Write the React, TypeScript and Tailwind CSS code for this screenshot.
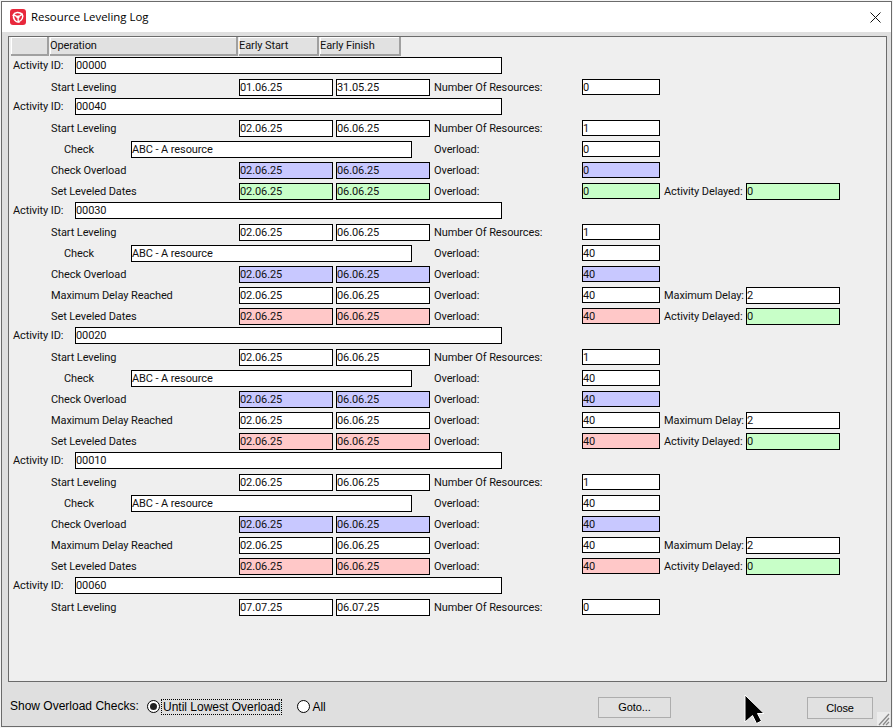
type Tone = 'white' | 'blue' | 'green' | 'red';

const tones: Record<Tone, string> = {
  white: 'bg-white',
  blue: 'bg-[#c8c8ff]',
  green: 'bg-[#c8ffc8]',
  red: 'bg-[#ffc8c8]',
};

type Op = {
  name: string;
  start: string;
  finish: string;
  tone?: Tone;
  label: string;
  value: string;
  valueTone?: Tone;
  extraLabel?: string;
  extra?: string;
  extraTone?: Tone;
};

const startLeveling = (start: string, finish: string, value: string): Op => ({
  name: 'Start Leveling', start, finish, label: 'Number Of Resources:', value,
});

const overloadOps: Op[] = [
  startLeveling('02.06.25', '06.06.25', '1'),
  { name: 'Check', start: '', finish: '', label: 'Overload:', value: '40' },
  { name: 'Check Overload', start: '02.06.25', finish: '06.06.25', tone: 'blue', label: 'Overload:', value: '40', valueTone: 'blue' },
  { name: 'Maximum Delay Reached', start: '02.06.25', finish: '06.06.25', label: 'Overload:', value: '40', extraLabel: 'Maximum Delay:', extra: '2' },
  { name: 'Set Leveled Dates', start: '02.06.25', finish: '06.06.25', tone: 'red', label: 'Overload:', value: '40', valueTone: 'red', extraLabel: 'Activity Delayed:', extra: '0', extraTone: 'green' },
];

const activities: { id: string; ops: Op[] }[] = [
  { id: '00000', ops: [startLeveling('01.06.25', '31.05.25', '0')] },
  {
    id: '00040',
    ops: [
      startLeveling('02.06.25', '06.06.25', '1'),
      { name: 'Check', start: '', finish: '', label: 'Overload:', value: '0' },
      { name: 'Check Overload', start: '02.06.25', finish: '06.06.25', tone: 'blue', label: 'Overload:', value: '0', valueTone: 'blue' },
      { name: 'Set Leveled Dates', start: '02.06.25', finish: '06.06.25', tone: 'green', label: 'Overload:', value: '0', valueTone: 'green', extraLabel: 'Activity Delayed:', extra: '0', extraTone: 'green' },
    ],
  },
  { id: '00030', ops: overloadOps },
  { id: '00020', ops: overloadOps },
  { id: '00010', ops: overloadOps },
  { id: '00060', ops: [startLeveling('07.07.25', '06.07.25', '0')] },
];

function Field({ value, tone = 'white', className }: { value: string; tone?: Tone; className: string }) {
  return (
    <div className={`shrink-0 border border-black leading-[15px] ${tones[tone]} ${className}`}>{value}</div>
  );
}

function OpRow({ op }: { op: Op }) {
  const isCheck = op.name === 'Check';
  return (
    <div className="flex h-[17px] leading-[17px]">
      {isCheck ? (
        <>
          <div className="w-[120px] shrink-0 pl-[53px]">{op.name}</div>
          <Field value="ABC - A resource" className="h-[17px] w-[281px]" />
          <div className="w-[22px] shrink-0" />
        </>
      ) : (
        <>
          <div className="w-[228px] shrink-0 pl-[40px]">{op.name}</div>
          <Field value={op.start} tone={op.tone} className="h-[17px] w-[94px]" />
          <div className="w-[3px] shrink-0" />
          <Field value={op.finish} tone={op.tone} className="h-[17px] w-[94px]" />
          <div className="w-[4px] shrink-0" />
        </>
      )}
      <div className="w-[148px] shrink-0">{op.label}</div>
      <Field value={op.value} tone={op.valueTone} className="h-[16px] w-[78px]" />
      {op.extraLabel && <div className="w-[82px] shrink-0 whitespace-nowrap pl-[4px]">{op.extraLabel}</div>}
      {op.extra && <Field value={op.extra} tone={op.extraTone} className="ml-[4px] h-[17px] w-[94px]" />}
    </div>
  );
}

function ActivityGroup({ id, ops }: { id: string; ops: Op[] }) {
  return (
    <div className="flex flex-col">
      <div className="mb-[5px] flex h-[17px] leading-[17px]">
        <div className="w-[64px] shrink-0 pl-[2px]">Activity ID:</div>
        <Field value={id} className="h-[17px] w-[427px]" />
      </div>
      <div className="mb-[2px] flex flex-col gap-[4px]">
        {ops.map((op, i) => (
          <OpRow key={i} op={op} />
        ))}
      </div>
    </div>
  );
}

function HeaderCell({ label, className }: { label: string; className: string }) {
  return (
    <div className={`h-[19px] shrink-0 border-r-2 border-b-2 border-[#a0a0a0] bg-[#e1e1e1] leading-[17px] shadow-[inset_1px_1px_0_#fff] ${className}`}>
      {label}
    </div>
  );
}

export default function App() {
  return (
    <div className="relative h-[728px] w-[893px] overflow-hidden bg-[#f4f4f4] p-px font-['Liberation_Sans',sans-serif] text-black">
      <div className="flex h-[726px] w-[891px] flex-col border border-[#6b6b6b] bg-[#dfdfdf]">
        <div className="flex h-[30px] shrink-0 items-center bg-white pr-[10px] pl-[8px]">
          <svg width="16" height="16" viewBox="0 0 16 16" className="mr-[5px] shrink-0">
            <rect width="16" height="16" rx="3" fill="#e8283c" />
            <g fill="none" stroke="#fff" strokeWidth="1.4" strokeLinecap="round">
              <path d="M3 6.5C4.5 3 9.5 2.5 12 5.5L7 8.5" />
              <path d="M3 6.5C4.5 3 9.5 2.5 12 5.5L7 8.5" transform="rotate(120 8 8)" />
              <path d="M3 6.5C4.5 3 9.5 2.5 12 5.5L7 8.5" transform="rotate(240 8 8)" />
            </g>
          </svg>
          <div className="text-[11.4px] font-['Open_Sans',sans-serif]">Resource Leveling Log</div>
          <svg width="11" height="11" viewBox="0 0 11 11" className="ml-auto">
            <path d="M.5.5l10 10M10.5.5l-10 10" stroke="#111" strokeWidth="1" />
          </svg>
        </div>
        <div className="flex min-h-0 flex-1 flex-col pt-[4px] pr-[4px] pl-[6px]">
          <div className="h-[646px] shrink-0 border border-[#6b6b6b] bg-[#efefef] pl-[2px] font-['Roboto',sans-serif] text-[11px] tracking-[-0.1px] text-[#111]">
            <div className="mb-[1px] flex gap-px">
              <HeaderCell label="" className="w-[38px]" />
              <HeaderCell label="Operation" className="w-[188px]" />
              <HeaderCell label="Early Start" className="w-[80px]" />
              <HeaderCell label="Early Finish" className="w-[81px]" />
            </div>
            {activities.map((a) => (
              <ActivityGroup key={a.id} id={a.id} ops={a.ops} />
            ))}
          </div>
          <div className="flex items-start pt-[15px] text-[12px]">
            <div className="w-[139px] shrink-0 pl-[2px]">Show Overload Checks:</div>
            <div className="mt-[3px] mr-[1px] flex h-[13px] w-[13px] shrink-0 items-center justify-center rounded-full border border-black bg-white">
              <div className="h-[7px] w-[7px] rounded-full bg-[#222]" />
            </div>
            <div className="mt-[2px] h-[16px] border border-dotted border-black px-px leading-[14px]">Until Lowest Overload</div>
            <div className="mt-[3px] mr-[2px] ml-[15px] h-[13px] w-[13px] shrink-0 rounded-full border border-black bg-white" />
            <div className="mt-[2px] leading-[16px]">All</div>
            <div className="ml-auto flex items-start gap-[136px] pr-[14px] text-[11px] tracking-[-0.1px]">
              <button className="h-[21px] w-[73px] border border-[#adadad] bg-[#e1e1e1]">Goto...</button>
              <button className="h-[22px] w-[66px] border border-[#adadad] bg-[#e1e1e1]">Close</button>
            </div>
          </div>
        </div>
      </div>
      <svg width="13" height="14" viewBox="0 0 13 14" className="absolute top-[712px] left-[877px] bg-[#ececec]">
        <path d="M12 2L2 13M12 6l-6 7M12 10l-3 3" stroke="#8a8a8a" strokeWidth="1.3" />
      </svg>
      <svg width="24" height="32" viewBox="0 0 24 32" className="absolute top-[694px] left-[743px]">
        <path d="M2 1L21 19.5H14.5L18.5 27L13.5 29.5L9.5 21.5L2 28Z" fill="#000" stroke="#fff" strokeWidth="1" />
      </svg>
    </div>
  );
}
